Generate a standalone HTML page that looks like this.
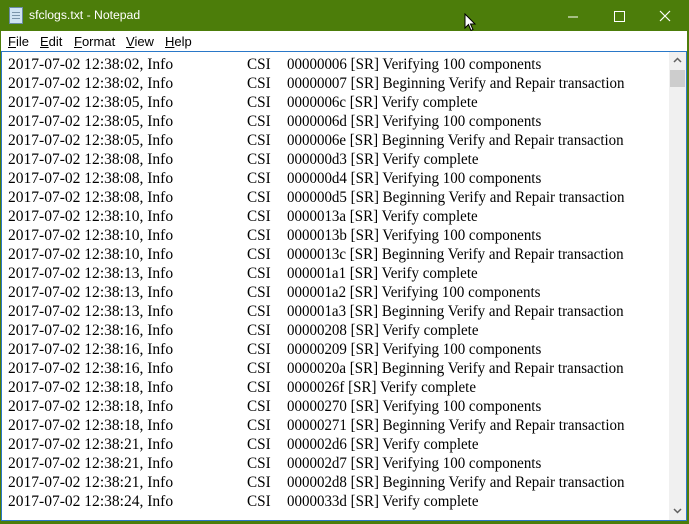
<!DOCTYPE html>
<html><head><meta charset="utf-8"><style>
*{margin:0;padding:0;box-sizing:border-box}
html,body{width:689px;height:524px;overflow:hidden;background:#fff}
.win{position:absolute;left:0;top:0;width:689px;height:524px;background:#4c7d0a}
.title{position:absolute;left:0;top:0;width:689px;height:31px;color:#fff;font:12.2px "Liberation Sans",sans-serif}
.title .t{position:absolute;left:29px;top:8px}
.icon{position:absolute;left:9px;top:7px;width:14px;height:17px;background:#cfe3f2;border:1px solid #6a8aa5}
.icon:before{content:"";position:absolute;left:2px;right:2px;top:4px;height:8px;background:repeating-linear-gradient(#7a95ab 0 1px,transparent 1px 3px)}
.menu{position:absolute;left:1px;top:31px;width:686px;height:21px;background:#fff;font:13px "Liberation Sans",sans-serif;color:#000}
.menu span{position:absolute;top:3px}
.menu u{text-decoration:underline}
.edit{position:absolute;left:1px;top:51px;width:686px;height:470px;background:#fff;border:1px solid #2a78c8;overflow:hidden}
.sb{position:absolute;right:0;top:0;width:17px;height:468px;background:#f0f0f0}
.thumb{position:absolute;left:1px;top:18px;width:15px;height:17px;background:#cdcdcd}
.txt{position:absolute;left:6px;top:3px;font:16px "Liberation Serif",serif;line-height:19px;color:#000;white-space:pre}
.row{position:relative;height:19px}
.row span{position:absolute;top:0;transform-origin:0 0}
.c1{left:0;transform:scaleX(0.97)}.c2{left:239px;transform:scaleX(0.95)}.c3{left:279px;transform:scaleX(0.936)}
</style></head><body>
<div class="win">
<div class="title"><div class="icon"></div><div class="t">sfclogs.txt - Notepad</div>
<svg style="position:absolute;left:560px;top:10px" width="120" height="14">
<line x1="8" y1="7" x2="18" y2="7" stroke="#fff" stroke-width="1"/>
<rect x="54.5" y="1.5" width="10" height="10" fill="none" stroke="#fff"/>
<path d="M100 1 L110 11 M110 1 L100 11" stroke="#fff" stroke-width="1.2"/>
</svg>
<svg style="position:absolute;left:464px;top:13px" width="14" height="20"><path d="M1 1 L1 15 L4.5 11.5 L7 17.5 L9 16.5 L6.5 11 L11 11 Z" fill="#fff" stroke="#000" stroke-width="1"/></svg>
</div>
<div class="menu"><span style="left:7px"><u>F</u>ile</span><span style="left:39px"><u>E</u>dit</span><span style="left:73px"><u>F</u>ormat</span><span style="left:125px"><u>V</u>iew</span><span style="left:164px"><u>H</u>elp</span></div>
<div class="edit">
<div class="txt" id="t"></div>
<div class="sb"><div class="thumb"></div>
<svg style="position:absolute;left:4px;top:5px" width="9" height="6"><path d="M1 5 L4.5 1.5 L8 5" fill="none" stroke="#606060" stroke-width="1.5"/></svg>
<svg style="position:absolute;left:4px;top:456px" width="9" height="6"><path d="M1 1 L4.5 4.5 L8 1" fill="none" stroke="#606060" stroke-width="1.5"/></svg>
</div>
</div>
</div>
<script>
var d=[["02","00000006","Verifying 100 components"],["02","00000007","Beginning Verify and Repair transaction"],["05","0000006c","Verify complete"],["05","0000006d","Verifying 100 components"],["05","0000006e","Beginning Verify and Repair transaction"],["08","000000d3","Verify complete"],["08","000000d4","Verifying 100 components"],["08","000000d5","Beginning Verify and Repair transaction"],["10","0000013a","Verify complete"],["10","0000013b","Verifying 100 components"],["10","0000013c","Beginning Verify and Repair transaction"],["13","000001a1","Verify complete"],["13","000001a2","Verifying 100 components"],["13","000001a3","Beginning Verify and Repair transaction"],["16","00000208","Verify complete"],["16","00000209","Verifying 100 components"],["16","0000020a","Beginning Verify and Repair transaction"],["18","0000026f","Verify complete"],["18","00000270","Verifying 100 components"],["18","00000271","Beginning Verify and Repair transaction"],["21","000002d6","Verify complete"],["21","000002d7","Verifying 100 components"],["21","000002d8","Beginning Verify and Repair transaction"],["24","0000033d","Verify complete"]];
var h="";d.forEach(function(r){h+='<div class="row"><span class="c1">2017-07-02 12:38:'+r[0]+', Info</span><span class="c2">CSI</span><span class="c3">'+r[1]+' [SR] '+r[2]+'</span></div>';});
document.getElementById("t").innerHTML=h;
</script>
</body></html>
